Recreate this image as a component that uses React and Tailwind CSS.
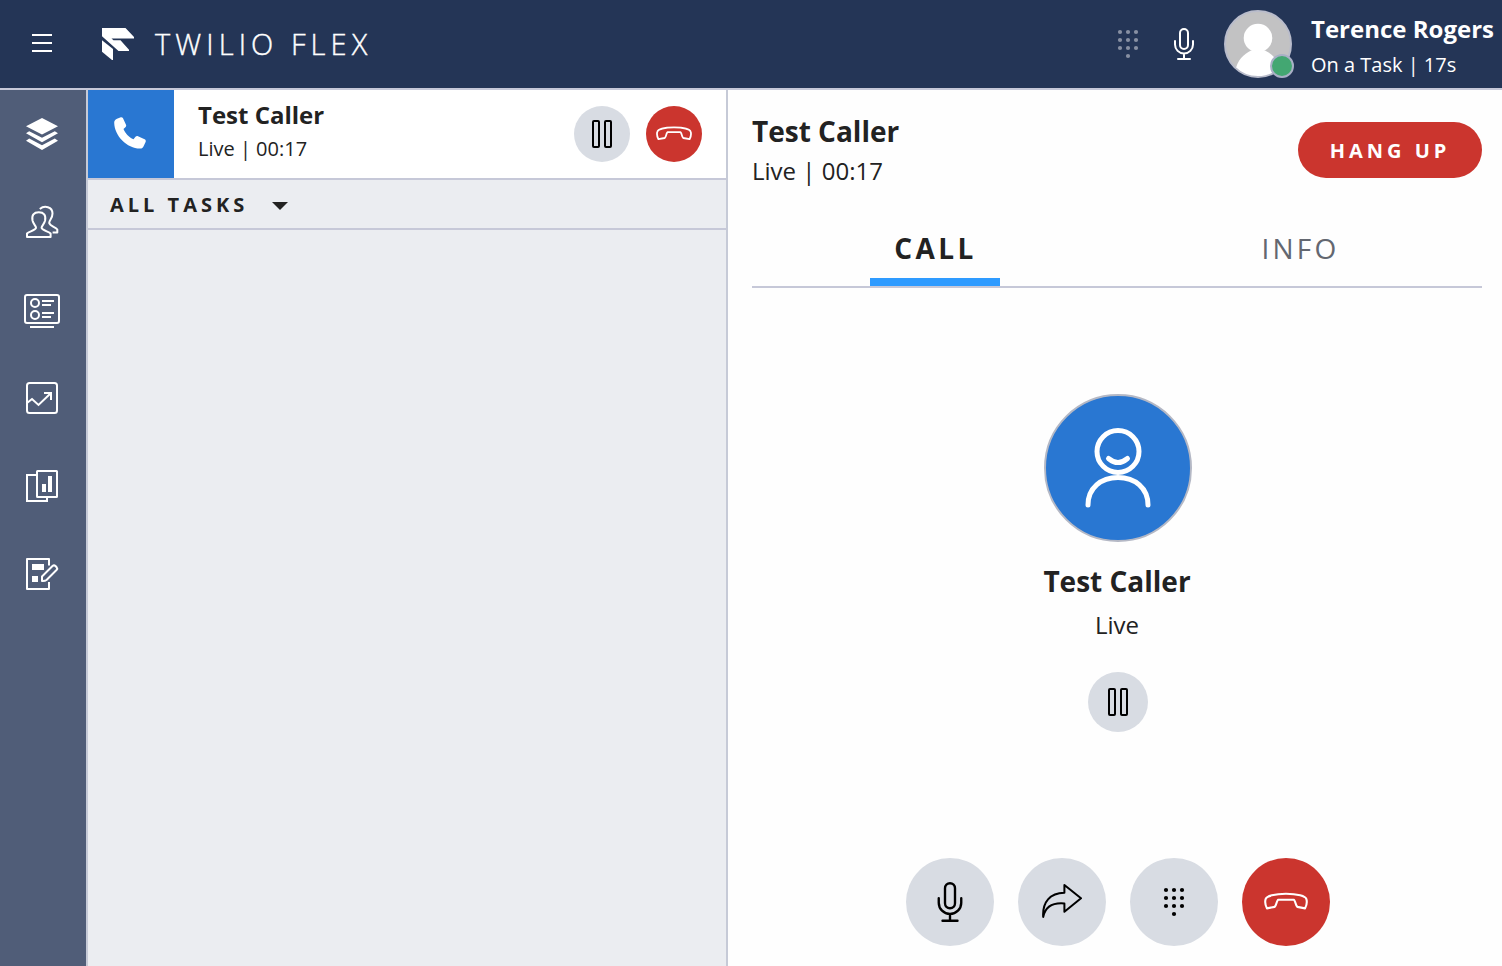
const box = (size, props) => ({ width: size, height: size, fill: 'none', ...props });

function MenuIcon() {
  return (
    <svg {...box(20, { viewBox: '0 0 20 20' })} stroke="white" strokeWidth="2">
      <path d="M0 2H20M0 10H20M0 18H20" />
    </svg>
  );
}

function FlexLogo() {
  return (
    <svg width="32" height="32" viewBox="0 0 32 32" fill="white">
      <path d="M0 0H23.5L32 9V10.5H9.5L11.5 12.2H18.5L27 21.8V23H16.5L0 8.3Z" />
      <path d="M0 12.2L11 21V32H10L0 23.8Z" />
    </svg>
  );
}

function DialpadIcon({ className }) {
  const dots = [[8, 4], [16, 4], [24, 4], [8, 12], [16, 12], [24, 12], [8, 20], [16, 20], [24, 20], [16, 28]];
  return (
    <svg width="32" height="32" viewBox="0 0 32 32" className={className} fill="currentColor">
      {dots.map(([x, y]) => <circle key={x + '-' + y} cx={x} cy={y} r="2.1" />)}
    </svg>
  );
}

function MicIcon({ size, stroke = 2 }) {
  return (
    <svg {...box(size, { viewBox: '0 0 32 32' })} stroke="currentColor" strokeWidth={stroke} strokeLinecap="round">
      <rect x="12" y="1" width="8" height="20" rx="4" />
      <path d="M7 13V16.5A9 9 0 0 0 25 16.5V13M16 26V31M10 31H22" />
    </svg>
  );
}

function PauseIcon() {
  return (
    <svg {...box(28, { viewBox: '0 0 28 28' })} stroke="black" strokeWidth="2">
      <rect x="5" y="1" width="6" height="26" rx="1" />
      <rect x="17" y="1" width="6" height="26" rx="1" />
    </svg>
  );
}

function HangUpIcon({ size, stroke = 1.8 }) {
  return (
    <svg {...box(size, { viewBox: '0 0 36 36' })} stroke="white" strokeWidth={stroke} strokeLinejoin="round">
      <path d="M2.4 23.2C1 20.3 .7 17.4 1.4 15.5C2.1 13.3 8.5 11.3 18 11.3S33.9 13.3 34.6 15.5C35.3 17.4 35 20.3 33.6 23.2L27.3 22C25.5 20.6 26.2 18.2 24.6 16.2H11.4C9.8 18.2 10.5 20.6 8.7 22Z" />
    </svg>
  );
}

function TransferIcon() {
  return (
    <svg {...box(40, { viewBox: '0 0 40 40' })} stroke="black" strokeWidth="2" strokeLinejoin="round">
      <path d="M1.2 35C.2 20 8 10.9 22.4 10.7V3L39 16.3L22.4 29.8V21.5C10.5 20.5 3.2 25 1.2 35Z" />
    </svg>
  );
}

function PhoneIcon() {
  return (
    <svg width="32" height="32" viewBox="0 0 32 32" fill="white">
      <path d="M3 1.8L6.2 .4C7.4 -.1 8.5 .2 9 1.3L12 7.8C12.4 8.8 12.2 9.6 11.4 10.3L9.5 12.1C11 16 15 20.5 19.5 22.3L21.5 19.8C22.2 19 23 18.8 24 19.2L30.6 22.3C31.8 22.9 32 24 31.6 25L29.6 29.3C28.9 31 27.6 31.7 26 31.6C13 31.5 .5 19 .2 5.8C.2 4 1 2.6 3 1.8Z" />
    </svg>
  );
}

const navIcons = [
  <g key="tasks" fill="white" stroke="none">
    <path d="M18 2L34 10.2L18 18.6L2 10.2Z" />
    <path d="M5.2 15.2L18 21.8L30.8 15.2L34 17.3L18 26.2L2 17.3Z" />
    <path d="M5.2 22.6L18 29.2L30.8 22.6L34 24.8L18 34L2 24.8Z" />
  </g>,
  <g key="teams" strokeWidth="2" strokeLinejoin="round">
    <path d="M3 33V29.5C5 27.5 11 26.5 12 23.8C12 21.8 9.5 20.5 8.5 16.5C7.5 11 9.8 8.2 14.8 8.2S22.1 11 21.1 16.5C20.1 20.5 17.6 21.8 17.6 23.8C18.6 26.5 24.6 27.5 26.6 29.5V33Z" />
    <path d="M15.8 5C20.5 1 28.5 2.8 28.5 9.5C28.5 14.5 25.5 15.5 25.2 19C26 22 31.5 23 33.3 25.5V28.6H28.6" />
  </g>,
  <g key="queues">
    <rect x="1" y="3" width="34" height="28" rx="2" />
    <circle cx="11" cy="11" r="4" />
    <circle cx="11" cy="23" r="4" />
    <path d="M18 9H30M18 13H27M18 21H30M18 25H27M6 35H30" />
  </g>,
  <g key="analytics">
    <rect x="3" y="3" width="30" height="30" rx="2.5" />
    <path d="M3 23L8 19L14.5 25L27 13M20 13H27V20" />
  </g>,
  <g key="reports">
    <rect x="13" y="3" width="20" height="26" rx=".5" />
    <path d="M13 7H3V33H23V29" />
    <path d="M18 16H22V24H18ZM24 8H28V24H24Z" fill="white" stroke="none" />
  </g>,
  <g key="forms" strokeLinejoin="round">
    <path d="M25 9.5V3H3V33H25V26" />
    <path d="M8 8H20V14H8ZM8 20H14V26H8Z" fill="white" stroke="none" />
    <path d="M18 25V20.5L28.5 10Q30 8.7 31.5 10L32.6 11.2Q33.8 12.6 32.5 14L22.5 24Q21 25.2 18 25Z" />
  </g>,
];

function Header() {
  return (
    <header className="flex h-[90px] shrink-0 items-center border-b-2 border-[#c6c8d8] bg-[#243556] text-white">
      <div className="flex flex-1 items-center pl-8">
        <button className="mr-[50px] pb-0.5"><MenuIcon /></button>
        <FlexLogo />
        <span className="ml-[21px] whitespace-nowrap pb-0.5 text-[29px] font-light leading-none tracking-[5.1px] [-webkit-text-stroke:0.4px_white]">TWILIO FLEX</span>
      </div>
      <DialpadIcon className="text-[#8890a3]" />
      <button className="ml-6"><MicIcon size={32} /></button>
      <div className="relative ml-6 h-[68px] w-[68px]">
        <svg width="68" height="68" viewBox="0 0 68 68">
          <clipPath id="avatar"><circle cx="34" cy="34" r="33" /></clipPath>
          <circle cx="34" cy="34" r="33" fill="#c2c2c3" />
          <g clipPath="url(#avatar)" fill="white">
            <circle cx="34" cy="28" r="14.3" />
            <path d="M11 62C13 50 20 44 27 40.5H41C48 44 55 50 57 62V68H11Z" />
          </g>
          <circle cx="34" cy="34" r="33" fill="none" stroke="#b9bccb" strokeWidth="2" />
        </svg>
        <span className="absolute left-[46px] top-[44px] h-6 w-6 rounded-full border-2 border-[#a9b0c6] bg-[#43a772]" />
      </div>
      <div className="ml-[19px] w-[191px] whitespace-nowrap pt-1.5">
        <div className="text-2xl font-bold leading-8">Terence Rogers</div>
        <div className="mt-1 text-xl leading-8">On a Task | 17s</div>
      </div>
    </header>
  );
}

function Sidebar() {
  return (
    <nav className="flex w-[88px] shrink-0 flex-col border-r-2 border-[#c6cad7] bg-[#505d78] pr-0.5">
      {navIcons.map((icon) => (
        <button key={icon.key} className="flex h-[88px] items-center justify-center">
          <svg width="36" height="36" viewBox="0 0 36 36" fill="none" stroke="white" strokeWidth="2">{icon}</svg>
        </button>
      ))}
    </nav>
  );
}

function TaskList() {
  return (
    <section className="flex w-[640px] shrink-0 flex-col border-r-2 border-[#c6cad7] bg-[#ebedf1]">
      <div className="flex h-[90px] items-center border-b-2 border-[#c6c8d8] bg-white pr-6">
        <div className="flex h-[88px] w-[86px] items-center justify-center bg-[#2977d2] pb-0.5 pr-[3px]"><PhoneIcon /></div>
        <div className="ml-6 flex-1 whitespace-nowrap pb-1">
          <div className="text-2xl font-bold leading-8">Test Caller</div>
          <div className="mt-0.5 text-xl leading-8">Live | 00:17</div>
        </div>
        <button className="flex h-14 w-14 items-center justify-center rounded-full bg-[#d8dce3]"><PauseIcon /></button>
        <button className="ml-4 flex h-14 w-14 items-center justify-center rounded-full bg-[#cb352e]"><HangUpIcon size={36} /></button>
      </div>
      <button className="flex h-[50px] items-center border-b-2 border-[#c6c8d8] pl-[22px] pt-0.5">
        <span className="text-xl font-bold tracking-[4px]">ALL TASKS</span>
        <svg className="ml-6 mt-0.5" width="16" height="8" viewBox="0 0 16 8" fill="#222"><path d="M0 0H16L8 8Z" /></svg>
      </button>
    </section>
  );
}

function CallPanel() {
  const round = 'flex h-[88px] w-[88px] items-center justify-center rounded-full';
  return (
    <main className="flex flex-1 flex-col bg-[#fefefe] pl-6 pr-5">
      <div className="flex h-[120px] items-center justify-between">
        <div className="whitespace-nowrap pt-0.5">
          <div className="text-[28px] font-bold leading-9">Test Caller</div>
          <div className="mt-1 text-2xl leading-9">Live | 00:17</div>
        </div>
        <button className="flex h-14 w-[184px] items-center justify-center rounded-full bg-[#cb352e] pt-0.5 text-xl font-bold tracking-[4px] text-white">HANG UP</button>
      </div>
      <div className="flex h-[78px] border-b-2 border-[#c6c8d8]">
        <div className="flex w-1/2 justify-center">
          <div className="flex h-[76px] w-[130px] items-center justify-center border-b-8 border-[#2e9bff] pl-0.5 pt-2 text-[28px] font-bold tracking-[3.4px]">CALL</div>
        </div>
        <div className="flex w-1/2 justify-center">
          <div className="flex h-[76px] w-[130px] items-center justify-center pl-0.5 text-[28px] tracking-[3.2px] text-[#636770]">INFO</div>
        </div>
      </div>
      <div className="ml-0.5 flex flex-1 flex-col items-center pt-[106px]">
        <svg width="148" height="148" viewBox="0 0 148 148" fill="none" stroke="white" strokeWidth="5" strokeLinecap="round">
          <circle cx="74" cy="74" r="73" fill="#2977d2" stroke="#b4b8c5" strokeWidth="2" />
          <circle cx="74" cy="57.5" r="21" />
          <path d="M64.5 64.5Q74 72.5 83.5 64.5M44 111C44 94 57 83.5 74 83.5S104 94 104 111" />
        </svg>
        <div className="mt-[21px] pr-0.5 text-[28px] font-bold leading-9">Test Caller</div>
        <div className="mt-2 pr-0.5 text-2xl leading-9">Live</div>
        <button className="mt-[29px] flex h-[60px] w-[60px] items-center justify-center rounded-full bg-[#d8dce3]"><PauseIcon /></button>
      </div>
      <div className="mb-5 ml-0.5 flex justify-center gap-6 text-black">
        <button className={`${round} bg-[#d8dce3]`}><MicIcon size={40} stroke={1.9} /></button>
        <button className={`${round} bg-[#d8dce3]`}><TransferIcon /></button>
        <button className={`${round} bg-[#d8dce3]`}><DialpadIcon /></button>
        <button className={`${round} bg-[#cb352e]`}><HangUpIcon size={44} stroke={1.7} /></button>
      </div>
    </main>
  );
}

export default function App() {
  return (
    <div className="flex h-[966px] w-[1502px] flex-col overflow-hidden font-['Open_Sans',sans-serif] text-[#222222]">
      <Header />
      <div className="flex min-h-0 flex-1">
        <Sidebar />
        <TaskList />
        <CallPanel />
      </div>
    </div>
  );
}
